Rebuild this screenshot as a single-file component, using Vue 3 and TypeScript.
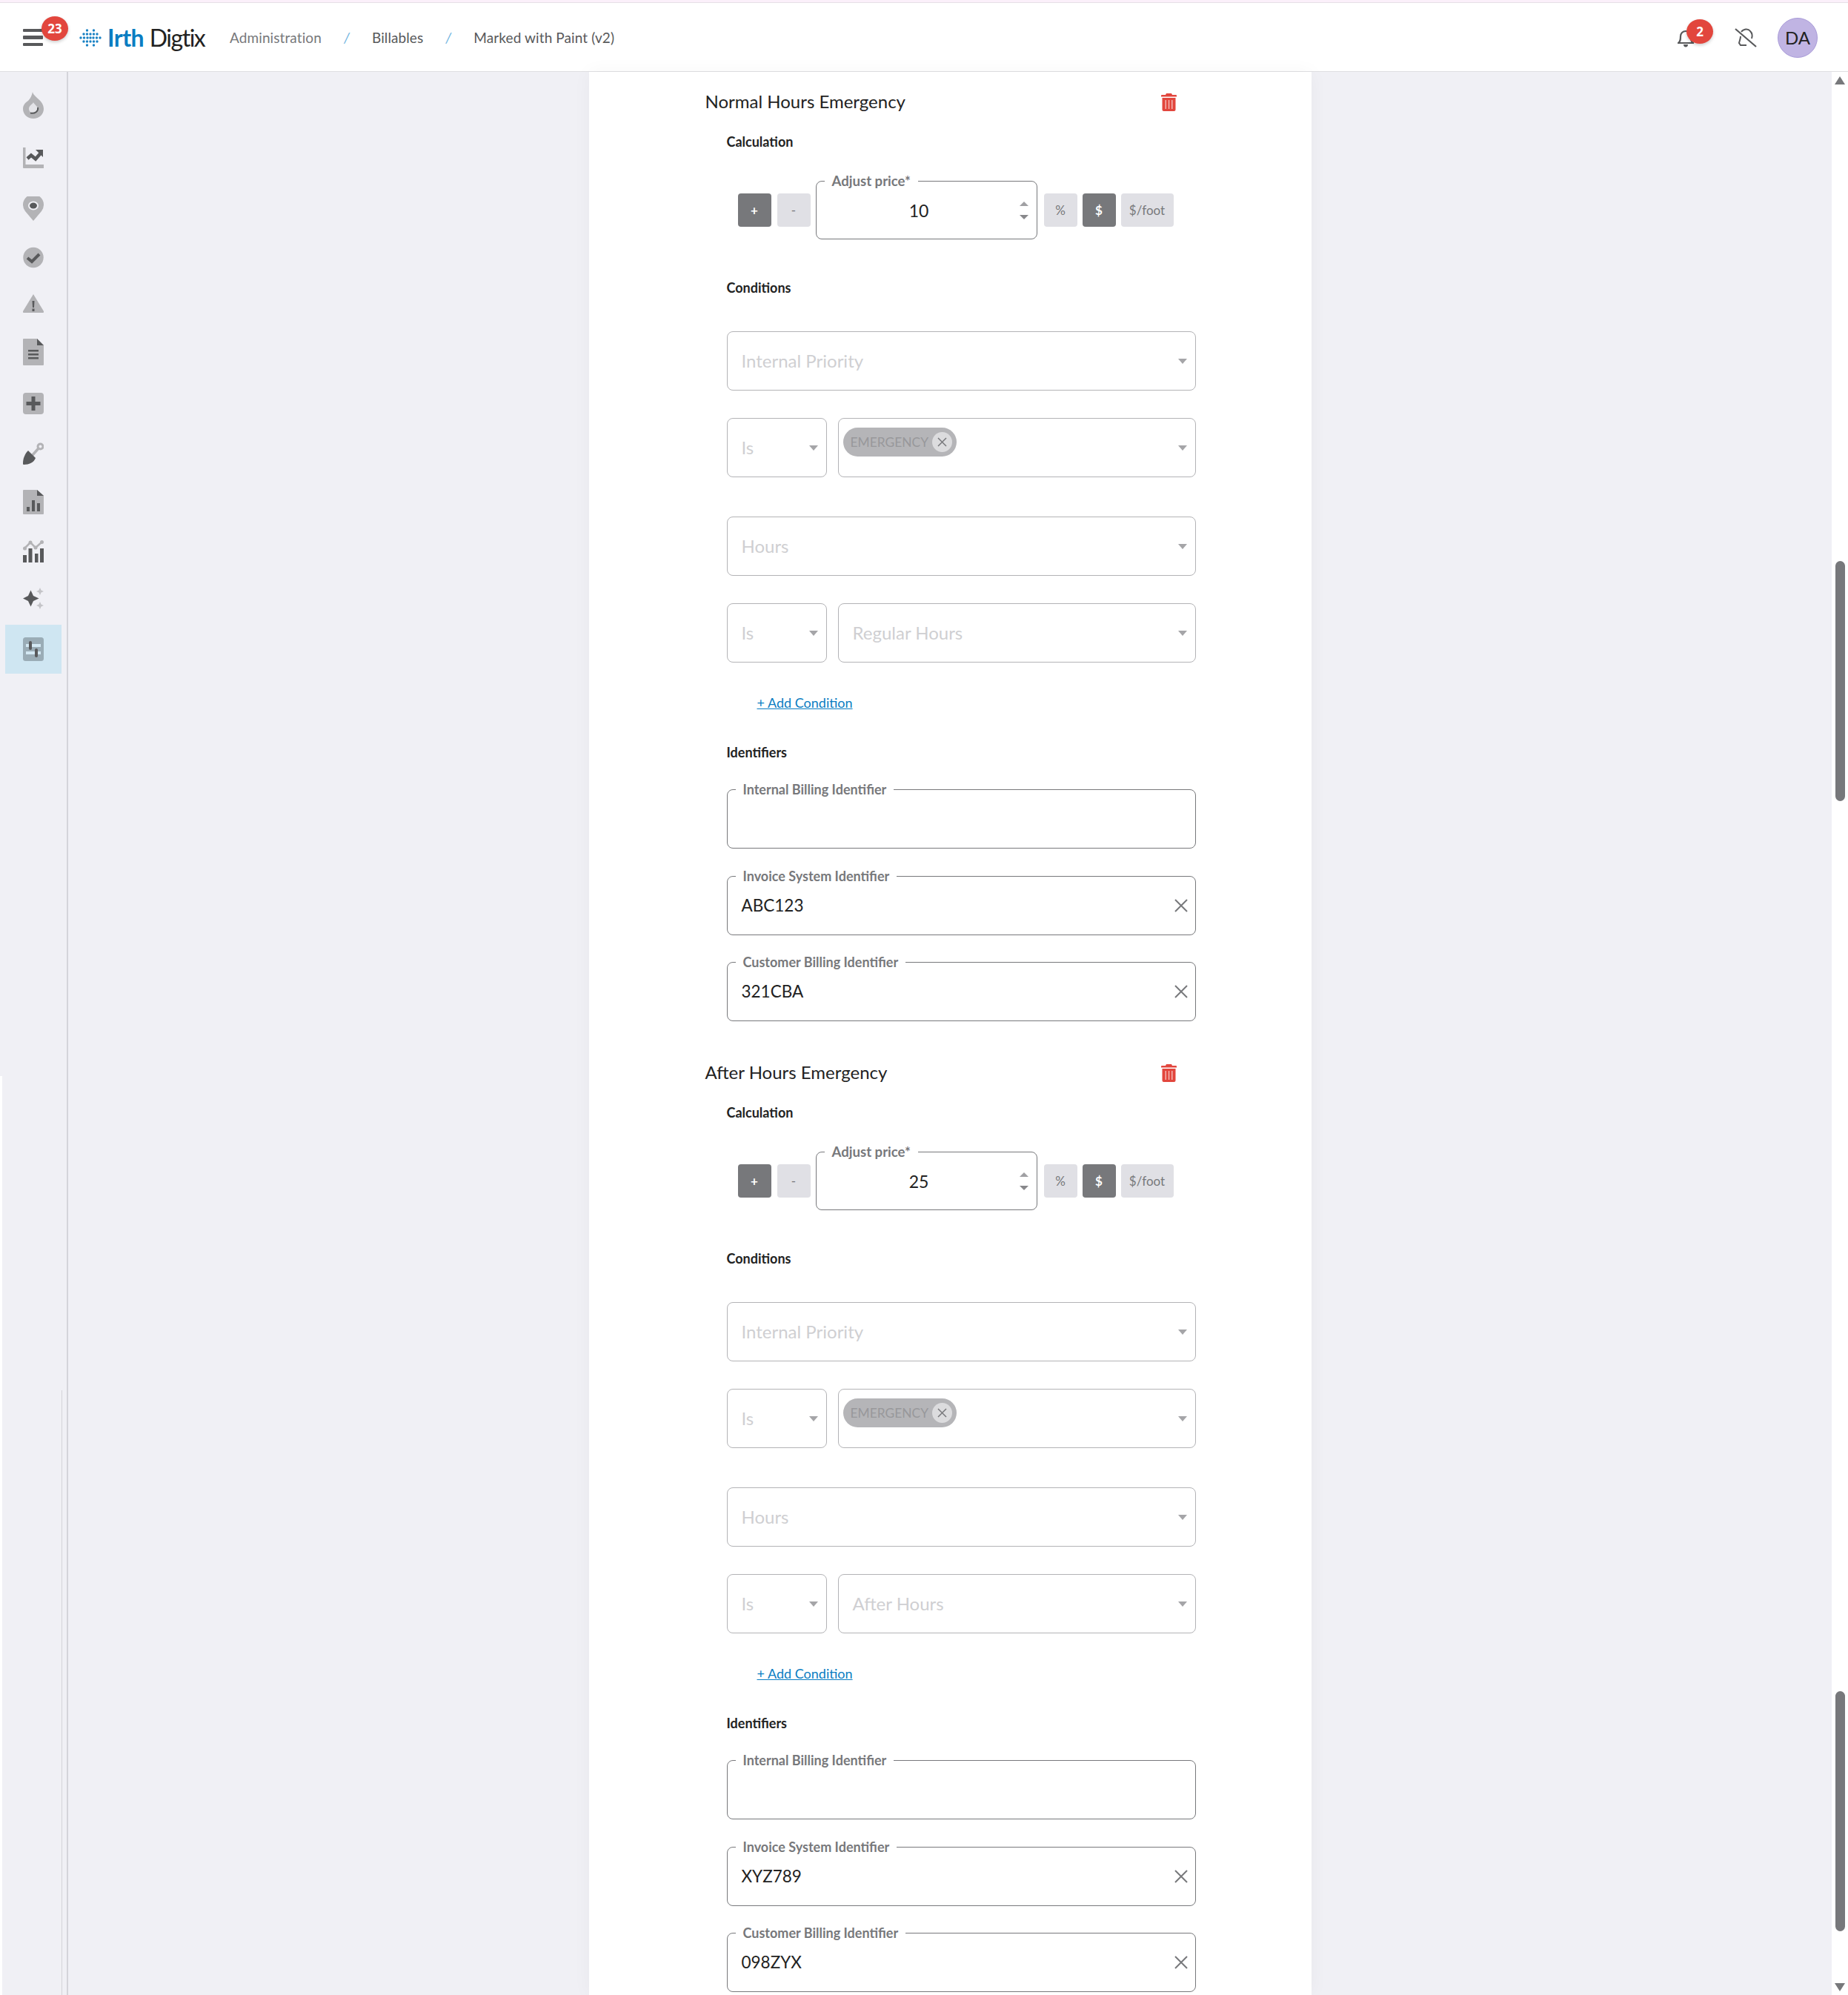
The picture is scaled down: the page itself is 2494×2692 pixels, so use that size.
<script setup lang="ts">
type Row = { field: string; op: string; chip?: string; value?: string };
type Section = {
  title: string;
  price: number;
  rows: Row[];
  identifiers: { label: string; value: string }[];
};

const sections: Section[] = [
  {
    title: 'Normal Hours Emergency',
    price: 10,
    rows: [
      { field: 'Internal Priority', op: 'Is', chip: 'EMERGENCY' },
      { field: 'Hours', op: 'Is', value: 'Regular Hours' },
    ],
    identifiers: [
      { label: 'Internal Billing Identifier', value: '' },
      { label: 'Invoice System Identifier', value: 'ABC123' },
      { label: 'Customer Billing Identifier', value: '321CBA' },
    ],
  },
  {
    title: 'After Hours Emergency',
    price: 25,
    rows: [
      { field: 'Internal Priority', op: 'Is', chip: 'EMERGENCY' },
      { field: 'Hours', op: 'Is', value: 'After Hours' },
    ],
    identifiers: [
      { label: 'Internal Billing Identifier', value: '' },
      { label: 'Invoice System Identifier', value: 'XYZ789' },
      { label: 'Customer Billing Identifier', value: '098ZYX' },
    ],
  },
];

const L = '#b3b3b6';
const D = '#58595b';

const navItems = [
  { top: 27, w: 28, h: 36, body: `<path fill="${L}" d="M13 0c1 7 15 11 15 23 0 7-6 13-14 13S0 30 0 23c0-6 4-9 7-11 3-3 5-7 6-12z"/><path fill="#e4e4e8" d="M14 14c-1 3-6 4-6 9 0 3 3 6 6 6s6-3 6-6c0-4-5-6-6-9z"/><path fill="none" stroke="${D}" stroke-width="2" d="M20 21c1 5-4 9-10 7.500"/>` },
  { top: 39, w: 28, h: 28, body: `<path fill="${L}" d="M0 0h3.500v23H28v5H1a1 1 0 0 1-1-1z"/><path fill="none" stroke="${D}" stroke-width="4.500" d="M6 15l5-4.500 6 5 7-8"/><path fill="${D}" d="M17 3h10v10z"/>` },
  { top: 38, w: 28, h: 33, body: `<path fill="${L}" d="M14 33L3 20A14 14 0 1 1 25 20z"/><ellipse cx="14" cy="12.500" rx="7" ry="6" fill="#f0f0f5"/><ellipse cx="14" cy="12.500" rx="5" ry="4" fill="${D}"/>` },
  { top: 35, w: 28, h: 29, body: `<circle cx="14" cy="14.500" r="13.700" fill="${L}"/><path fill="none" stroke="${D}" stroke-width="4" d="M6 15l6 5 10-10"/>` },
  { top: 35, w: 28, h: 25, body: `<path fill="${L}" d="M14 0l14 23a1.500 1.500 0 0 1-1 2H1a1.500 1.500 0 0 1-1-2z"/><path fill="${D}" d="M12.500 9h3l-.5 9h-2zM12.500 19.500h3V23h-3z"/>` },
  { top: 35, w: 28, h: 36, body: `<path fill="${L}" d="M1 0h18l9 9v26a1 1 0 0 1-1 1H1a1 1 0 0 1-1-1V1a1 1 0 0 1 1-1z"/><path fill="${D}" d="M19 0l9 9h-9zM7 15h14v2.500H7zM7 20h14v2.500H7zM7 25h14v2.500H7z"/>` },
  { top: 37, w: 28, h: 29, body: `<rect width="28" height="29" rx="4" fill="${L}"/><path fill="${D}" d="M11.500 5h5v7h7v5h-7v7h-5v-7h-7v-5h7z"/>` },
  { top: 38, w: 28, h: 30, body: `<path fill="none" stroke="${L}" stroke-width="3.500" d="M12 18l9-10"/><circle cx="23.500" cy="5.500" r="3.500" fill="none" stroke="${L}" stroke-width="3"/><path fill="${D}" d="M7 11l10 10c-2 6-9 9-16 9-1 0-1-1-1-2 0-7 3-13 7-17z"/>` },
  { top: 34, w: 28, h: 33, body: `<path fill="${L}" d="M1 0h18l9 8v24a1 1 0 0 1-1 1H1a1 1 0 0 1-1-1V1a1 1 0 0 1 1-1z"/><path fill="${D}" d="M19 0l9 8h-9zM5 23h4v6H5zM12 14h4v15h-4zM19 18h4v11h-4z"/>` },
  { top: 35, w: 28, h: 30, body: `<path fill="none" stroke="${L}" stroke-width="2.500" d="M2 11L10 3l7 7 9-8"/><circle cx="2.500" cy="11" r="2.500" fill="${L}"/><circle cx="10" cy="3" r="2.500" fill="${L}"/><circle cx="17" cy="10" r="2.500" fill="${L}"/><circle cx="25.500" cy="2.500" r="2.500" fill="${L}"/><path fill="${D}" d="M0 20h5v10H0zM7.500 11h5v19h-5zM16 18h4.500v12H16zM23 11h5v19h-5z"/>` },
  { top: 34, w: 28, h: 30, body: `<path fill="${D}" d="M10.500 3.500L14 11l7.500 3.500L14 18l-3.500 7.500L7 18l-7-3.500L7 11z"/><path fill="#c4c4c8" d="M23 0l1.600 3.400L28 5l-3.400 1.600L23 10l-1.600-3.400L18 5l3.400-1.600zM23 19l1.600 3.400L28 24l-3.400 1.600L23 29l-1.600-3.400L18 24l3.400-1.600z"/>` },
  { top: 20, w: 28, h: 32, active: true, body: `<rect width="28" height="32" rx="3.500" fill="#9aacb6"/><path fill="#d3e8f3" d="M4 9h20v4H4zM4 19h20v4H4z"/><rect x="8" y="5" width="4" height="12" rx="2" fill="${D}"/><rect x="16" y="15" width="4" height="12" rx="2" fill="${D}"/>` },
];

// logo dots, laid out in rows around the middle of the mark
const logoDots = [
  [10.5, 2], [19.5, 2],
  [6, 7], [10.5, 7], [15, 7], [19.5, 7], [24, 7],
  [2, 12], [6.5, 12], [11, 12], [15, 12], [19, 12], [23.5, 12], [28, 12],
  [6, 17], [10.5, 17], [15, 17], [19.5, 17], [24, 17],
  [10.5, 22], [19.5, 22],
];
</script>

<template>
  <div class="app">
    <div class="stripe"></div>
    <header class="topbar">
      <div class="burger">
        <span></span><span></span><span></span>
        <b class="badge burger-badge">23</b>
      </div>
      <svg class="logo-mark" width="30" height="24" viewBox="0 0 30 24">
        <circle v-for="(d, i) in logoDots" :key="i" :cx="d[0]" :cy="d[1]" r="1.700" fill="#1a82c4" />
      </svg>
      <div class="logo-text"><b>Irth</b> <span>Digtix</span></div>
      <nav class="crumbs">
        <span class="crumb first">Administration</span>
        <i>/</i>
        <span class="crumb">Billables</span>
        <i>/</i>
        <span class="crumb">Marked with Paint (v2)</span>
      </nav>
      <div class="top-right">
        <div class="bell">
          <svg width="22" height="26" viewBox="0 0 22 26">
            <path fill="none" stroke="#58595b" stroke-width="2.200" d="M1 20c3-2 3-5 3-9 0-4 3-7 7-7s7 3 7 7c0 4 0 7 3 9z" />
            <path fill="#58595b" d="M8 22h6c0 2-1 3.500-3 3.500S8 24 8 22z" />
          </svg>
          <b class="badge bell-badge">2</b>
        </div>
        <svg class="mute" width="30" height="26" viewBox="0 0 30 26">
          <path fill="none" stroke="#58595b" stroke-width="2" d="M9 5c3-4 9-5 12-1 3 3 3 7 2 10M8 11c0 3-1 5-2 9l2 3h8" />
          <path stroke="#58595b" stroke-width="2.200" d="M1 1l28 24" />
        </svg>
        <div class="avatar">DA</div>
      </div>
    </header>

    <div class="body">
      <aside class="sidebar">
        <div
          v-for="(item, i) in navItems"
          :key="i"
          class="nav-item"
          :class="{ active: item.active }"
          :style="{ marginTop: item.top + 'px' }"
        >
          <svg :width="item.w" :height="item.h" :viewBox="`0 0 ${item.w} ${item.h}`" v-html="item.body"></svg>
        </div>
        <div class="edge-white"></div>
        <div class="edge-line"></div>
      </aside>

      <main class="main">
        <div class="card">
          <section v-for="s in sections" :key="s.title" class="section">
            <div class="title-row">
              <h2>{{ s.title }}</h2>
              <svg class="trash" width="21" height="24" viewBox="0 0 21 24">
                <path fill="#e2463d" d="M7 0h7l1 2h5a1 1 0 0 1 1 1v1.500H0V3a1 1 0 0 1 1-1h5z" />
                <path fill="#e2463d" d="M1.500 6h18v16a2 2 0 0 1-2 2h-14a2 2 0 0 1-2-2z" />
                <path fill="#f3b7b3" d="M5.500 9H7v12H5.500zM9.800 9h1.500v12H9.800zM14 9h1.500v12H14z" />
              </svg>
            </div>

            <div class="inner">
              <h3 class="calc-label">Calculation</h3>
              <div class="calc">
                <button class="tog on">+</button>
                <button class="tog">-</button>
                <div class="field price">
                  <label>Adjust price*</label>
                  <span class="price-value">{{ s.price }}</span>
                  <span class="stepper"><i class="up"></i><i class="down"></i></span>
                </div>
                <div class="units">
                  <button class="tog">%</button>
                  <button class="tog on">$</button>
                  <button class="tog wide">$/foot</button>
                </div>
              </div>

              <h3 class="cond-label">Conditions</h3>
              <div v-for="r in s.rows" :key="r.field" class="cond">
                <div class="select">
                  <span class="ph">{{ r.field }}</span>
                  <i class="caret"></i>
                </div>
                <div class="cond-row">
                  <div class="select op">
                    <span class="ph">{{ r.op }}</span>
                    <i class="caret"></i>
                  </div>
                  <div class="select val">
                    <span v-if="r.chip" class="chip">
                      {{ r.chip }}
                      <span class="chip-x">
                        <svg width="13" height="13" viewBox="0 0 13 13"><path stroke="#77787b" stroke-width="1.500" d="M1 1l11 11M12 1L1 12" /></svg>
                      </span>
                    </span>
                    <span v-else class="ph">{{ r.value }}</span>
                    <i class="caret"></i>
                  </div>
                </div>
              </div>

              <a class="add">+ Add Condition</a>

              <h3 class="id-label">Identifiers</h3>
              <div class="ids">
                <div v-for="f in s.identifiers" :key="f.label" class="field text">
                  <label>{{ f.label }}</label>
                  <span class="val-text">{{ f.value }}</span>
                  <svg v-if="f.value" class="clear" width="18" height="18" viewBox="0 0 18 18">
                    <path stroke="#77787b" stroke-width="2" d="M1 1l16 16M17 1L1 17" />
                  </svg>
                </div>
              </div>
            </div>
          </section>
        </div>
      </main>

      <div class="scroll">
        <i class="arrow-up"></i>
        <div class="thumb one"></div>
        <div class="thumb two"></div>
        <i class="arrow-down"></i>
      </div>
    </div>
  </div>
</template>

<style>
html, body {
  margin: 0;
  overflow: hidden;
}
</style>

<style scoped>
.app {
  height: 2692px;
  display: flex;
  flex-direction: column;
  overflow: hidden;
  background: #f0f0f5;
  font-family: Lato, "Open Sans", sans-serif;
  color: #222;
}

.stripe {
  height: 4px;
  flex: none;
  background: #fbf0fa;
  border-bottom: 1px solid #e6dfe6;
  box-sizing: border-box;
}

.topbar {
  height: 93px;
  flex: none;
  box-sizing: border-box;
  display: flex;
  align-items: center;
  background: #fff;
  border-bottom: 1px solid #dfdfe2;
  padding: 1px 41px 0 31px;
}

.burger {
  position: relative;
  width: 27px;
  margin-right: 49px;
  display: flex;
  flex-direction: column;
  gap: 5px;
}
.burger span {
  display: block;
  height: 4.5px;
  background: #58595b;
  border-radius: 1px;
}

.badge {
  position: absolute;
  display: flex;
  align-items: center;
  justify-content: center;
  background: #e2463d;
  color: #fff;
  font-weight: 700;
  font-size: 17px;
  font-family: "Open Sans", sans-serif;
  border-radius: 50%;
  box-shadow: 0 2px 4px rgba(0, 0, 0, 0.2);
}
.burger-badge {
  left: 25px;
  top: -17px;
  width: 36px;
  height: 33px;
}

.logo-mark {
  margin-right: 8px;
}
.logo-text {
  font-size: 32px;
  line-height: 1;
  letter-spacing: -0.5px;
  color: #222;
  width: 165px;
  white-space: nowrap;
}
.logo-text b {
  color: #0a7dc2;
  font-weight: 700;
}
.logo-text span {
  letter-spacing: -1.5px;
}

.crumbs {
  display: flex;
  align-items: center;
  font-size: 19px;
  letter-spacing: 0.1px;
  color: #58595b;
}
.crumb.first {
  color: #77787b;
}
.crumbs i {
  color: #6fb4e0;
  margin: 0 30px;
}

.top-right {
  margin-left: auto;
  display: flex;
  align-items: center;
}
.bell {
  position: relative;
  width: 22px;
  height: 26px;
  margin-right: 55px;
}
.bell svg {
  display: block;
}
.bell-badge {
  left: 12px;
  top: -12px;
  width: 36px;
  height: 33px;
}
.mute {
  margin-right: 28px;
}
.avatar {
  width: 54px;
  height: 54px;
  box-sizing: border-box;
  border: 1px solid #a99bd8;
  border-radius: 50%;
  background: #c0b4e3;
  display: flex;
  align-items: center;
  justify-content: center;
  font-size: 24px;
}

.body {
  flex: 1;
  display: flex;
  min-height: 0;
}

.sidebar {
  position: relative;
  flex: none;
  width: 92px;
  box-sizing: border-box;
  border-right: 2px solid #d4d4da;
  display: flex;
  flex-direction: column;
  align-items: center;
}
.nav-item {
  display: flex;
  justify-content: center;
}
.nav-item svg {
  display: block;
}
.nav-item.active {
  align-self: flex-start;
  width: 76px;
  margin-left: 7px;
  padding: 17px 0;
  background: #cfe6f2;
}
.edge-white {
  position: absolute;
  left: 0;
  top: 1355px;
  bottom: 0;
  width: 3px;
  background: #fff;
}
.edge-line {
  position: absolute;
  left: 83px;
  top: 1779px;
  bottom: 0;
  width: 1px;
  background: #d4d4da;
}

.main {
  flex: 1;
  display: flex;
  justify-content: center;
  min-width: 0;
}
.card {
  width: 975px;
  box-sizing: border-box;
  padding: 21px 0 0 157px;
  background: #fff;
  box-shadow: 0 0 24px rgba(0, 0, 0, 0.04);
}

.section {
  margin-bottom: 50px;
}
.title-row {
  display: flex;
  align-items: center;
  justify-content: space-between;
  width: 636px;
  height: 40px;
}
h2 {
  margin: 0 0 3px;
  font-size: 24px;
  font-weight: 400;
  color: #222;
}

.inner {
  padding-left: 29px;
  width: 633px;
}
h3 {
  margin: 0;
  font-size: 18px;
  line-height: 20px;
  font-weight: 700;
  color: #222;
}
.calc-label {
  margin-top: 23px;
}
.cond-label {
  margin-top: 55px;
}
.id-label {
  margin-top: 47px;
}

.calc {
  margin-top: 43px;
  padding-left: 15px;
  display: flex;
  align-items: center;
  gap: 8px;
}
.tog {
  width: 45px;
  height: 45px;
  padding: 0;
  border: none;
  border-radius: 4px;
  background: #e0e0e5;
  color: #77787b;
  font-family: inherit;
  font-size: 17px;
}
.tog.on {
  background: #77787b;
  color: #fff;
  font-weight: 700;
}
.tog.wide {
  width: 71px;
}
.units {
  display: flex;
  gap: 7px;
  margin-left: 1px;
}

.field {
  position: relative;
  box-sizing: border-box;
  border: 1px solid #77787b;
  border-radius: 8px;
  display: flex;
  align-items: center;
}
.field label {
  position: absolute;
  left: 11px;
  top: -11px;
  padding: 0 10px;
  background: #fff;
  font-size: 18px;
  line-height: 20px;
  font-weight: 700;
  color: #77787b;
  white-space: nowrap;
}
.price {
  width: 299px;
  height: 79px;
  margin-left: -1px;
}
.price label {
  font-size: 18.6px;
}
.price-value {
  position: absolute;
  left: 0;
  width: 277px;
  text-align: center;
  font-size: 23px;
}
.stepper {
  position: absolute;
  right: 11px;
  top: 27px;
  display: flex;
  flex-direction: column;
  gap: 12px;
}
.stepper i {
  display: block;
  width: 0;
  height: 0;
  border-left: 6px solid transparent;
  border-right: 6px solid transparent;
}
.up {
  border-bottom: 6px solid #a0a0a3;
}
.down {
  border-top: 6px solid #88888b;
}

.select {
  position: relative;
  box-sizing: border-box;
  height: 80px;
  border: 1px solid #b3b3b6;
  border-radius: 8px;
  display: flex;
  align-items: center;
  padding: 0 0 2px 19px;
}
.ph {
  font-size: 24px;
  color: #cfcfd2;
}
.caret {
  position: absolute;
  right: 11px;
  top: 36px;
  width: 0;
  height: 0;
  border-left: 6.500px solid transparent;
  border-right: 6.500px solid transparent;
  border-top: 7px solid #a5a5a8;
}
.cond {
  margin-top: 49px;
}
.cond + .cond {
  margin-top: 53px;
}
.cond-row {
  margin-top: 37px;
  display: flex;
  gap: 15px;
}
.op {
  width: 135px;
  flex: none;
}
.val {
  flex: 1;
}
.chip {
  position: absolute;
  left: 6px;
  top: 12px;
  box-sizing: border-box;
  height: 39px;
  width: 153px;
  display: flex;
  align-items: center;
  justify-content: space-between;
  padding: 0 6px 0 10px;
  border-radius: 20px;
  background: #b5b5b8;
  color: #98989b;
  font-size: 17.4px;
}
.chip-x {
  width: 27px;
  height: 27px;
  border-radius: 50%;
  background: #dcdcde;
  display: flex;
  align-items: center;
  justify-content: center;
}

.add {
  display: inline-block;
  margin: 44px 0 0 41px;
  font-size: 18px;
  line-height: 20px;
  color: #0a7dc2;
  text-decoration: underline;
}

.ids {
  margin-top: 40px;
  display: flex;
  flex-direction: column;
  gap: 36.5px;
}
.text {
  height: 80px;
  padding: 0 0 1px 19px;
}
.val-text {
  font-size: 22.5px;
}
.clear {
  position: absolute;
  right: 10px;
  top: 30px;
}

.scroll {
  position: relative;
  flex: none;
  width: 22px;
  background: #fff;
}
.thumb {
  position: absolute;
  left: 5px;
  width: 13px;
  border-radius: 7px;
  background: #77787b;
}
.thumb.one {
  top: 660px;
  height: 324px;
}
.thumb.two {
  top: 2185px;
  height: 324px;
}
.arrow-up,
.arrow-down {
  position: absolute;
  left: 4px;
  width: 0;
  height: 0;
  border-left: 7.500px solid transparent;
  border-right: 7.500px solid transparent;
}
.arrow-up {
  top: 6px;
  border-bottom: 11px solid #77787b;
}
.arrow-down {
  bottom: 5px;
  border-top: 11px solid #77787b;
}
</style>
